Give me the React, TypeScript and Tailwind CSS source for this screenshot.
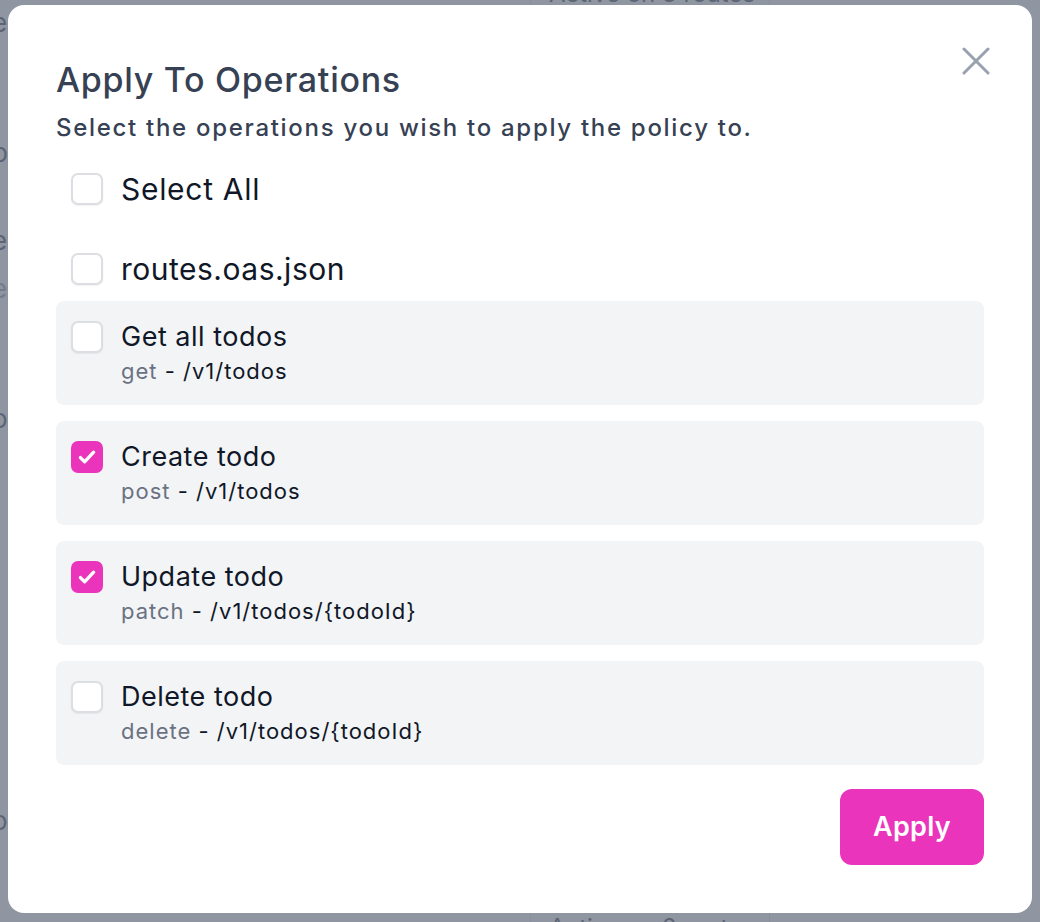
import { useState } from 'react'

type Op = { name: string; method: string; path: string }

const ops: Op[] = [
  { name: 'Get all todos', method: 'get', path: '/v1/todos' },
  { name: 'Create todo', method: 'post', path: '/v1/todos' },
  { name: 'Update todo', method: 'patch', path: '/v1/todos/{todoId}' },
  { name: 'Delete todo', method: 'delete', path: '/v1/todos/{todoId}' },
]

function Checkbox({ checked, onChange }: { checked: boolean; onChange: () => void }) {
  return (
    <button
      type="button"
      onClick={onChange}
      className={
        checked
          ? 'w-8 h-8 shrink-0 rounded-[7px] bg-[#eb34bc] flex items-center justify-center'
          : 'w-8 h-8 shrink-0 rounded-[7px] border-2 border-[#dcdee3] bg-white shadow-[0_1px_2px_rgba(0,0,0,0.06)]'
      }
    >
      {checked && (
        <svg className="w-6 h-6" viewBox="0 0 20 20" fill="none">
          <path d="M4.5 10.5l3.5 3.5 7.5-8" stroke="white" strokeWidth="2.8" strokeLinecap="round" strokeLinejoin="round" />
        </svg>
      )}
    </button>
  )
}

export default function App() {
  const [selected, setSelected] = useState<boolean[]>([false, true, true, false])
  const [file, setFile] = useState(false)
  const allSelected = selected.every(Boolean)

  const toggle = (i: number) => setSelected(s => s.map((v, j) => (j === i ? !v : v)))

  return (
    <div className="relative h-[922px] overflow-hidden bg-white font-['Inter',sans-serif]">
      {/* page behind the dialog */}
      <div className="flex">
        <div className="w-[8px] overflow-hidden flex flex-col text-[26px] text-gray-700 leading-none">
          <span className="mt-[10px] -ml-[8px]">e</span>
          <span className="mt-[104px] -ml-[8px]">b</span>
          <span className="mt-[62px] -ml-[8px]">e</span>
          <span className="mt-[22px] -ml-[8px] text-gray-400">e</span>
          <span className="mt-[104px] -ml-[8px]">o</span>
          <span className="mt-[192px] -ml-[8px]">l</span>
          <span className="mt-[158px] -ml-[8px]">o</span>
        </div>
        <div className="ml-[522px] w-[240px] h-[922px] border-x border-gray-200 flex flex-col justify-between text-[24px] leading-8 text-gray-700 pl-[18px] whitespace-nowrap">
          <span className="-mt-[22px]">Active on 3 routes</span>
          <span className="-mb-[22px]">Active on 2 routes</span>
        </div>
      </div>

      <div className="fixed inset-0 bg-gray-500/75" />

      <div className="fixed inset-0 pt-[5px] pl-[8px]">
        <div className="relative w-[1024px] h-[908px] rounded-2xl bg-white px-12 pt-[55px] pb-12 flex flex-col">
          <button type="button" className="absolute right-[42px] top-[42px] text-gray-400">
            <svg className="w-[28px] h-[28px]" viewBox="0 0 28 28" fill="none">
              <path d="M2 2l24 24M26 2L2 26" stroke="currentColor" strokeWidth="3" strokeLinecap="round" />
            </svg>
          </button>

          <h2 className="text-[34px] leading-[40px] font-medium tracking-[0.7px] text-gray-700">Apply To Operations</h2>
          <p className="mt-[12px] text-[24px] leading-[32px] font-medium tracking-[1.7px] text-gray-700">
            Select the operations you wish to apply the policy to.
          </p>

          <div className="mt-[25px] pl-[15px] flex items-center gap-[18px] h-10">
            <Checkbox checked={allSelected} onChange={() => setSelected(selected.map(() => !allSelected))} />
            <span className="text-[30px] tracking-[0.7px] text-gray-900">Select All</span>
          </div>

          <div className="mt-[40px] pl-[15px] flex items-center gap-[18px] h-10">
            <Checkbox checked={file} onChange={() => setFile(!file)} />
            <span className="text-[30px] tracking-[0.5px] text-gray-900">routes.oas.json</span>
          </div>

          <div className="mt-[12px] flex flex-col gap-4">
            {ops.map((op, i) => (
              <div key={op.name} className="rounded-lg bg-gray-100 px-[15px] py-[18px] flex items-start gap-[18px]">
                <div className="mt-[2px]">
                  <Checkbox checked={selected[i]} onChange={() => toggle(i)} />
                </div>
                <div className="flex flex-col">
                  <span className="text-[27px] leading-9 tracking-[0.5px] text-gray-900">{op.name}</span>
                  <span className="text-[22px] leading-8 tracking-[1px] text-gray-900">
                    <span className="text-gray-500">{op.method}</span> - {op.path}
                  </span>
                </div>
              </div>
            ))}
          </div>

          <div className="mt-6 flex justify-end">
            <button type="button" className="w-[144px] h-[76px] rounded-xl bg-[#eb34bc] text-white text-[27px] font-semibold tracking-[0.3px]">
              Apply
            </button>
          </div>
        </div>
      </div>
    </div>
  )
}
